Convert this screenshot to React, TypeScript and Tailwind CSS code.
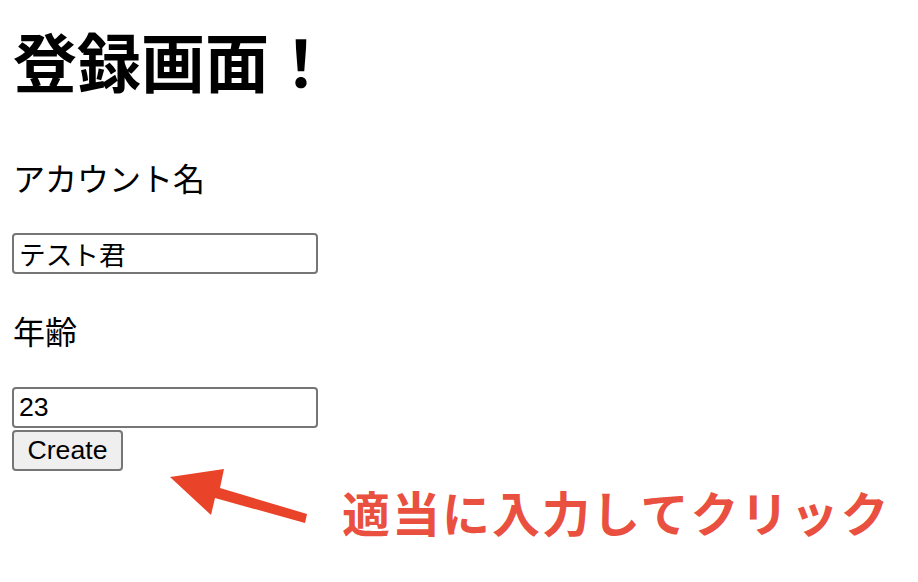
import React from "react";

export default function App() {
  return (
    <div className="relative w-[918px] h-[582px] bg-white overflow-hidden text-black">
      <div className="flex flex-col items-start pl-[12px]">
        <h1 className="mt-[27px] ml-[1px] font-['Noto_Sans_CJK_JP','Liberation_Sans',sans-serif] text-[64px] font-bold leading-none">
          登録画面！
        </h1>
        <p className="mt-[70px] ml-[1px] font-['Noto_Sans_CJK_JP','Liberation_Sans',sans-serif] text-[32px] leading-none">
          アカウント名
        </p>
        <input
          className="mt-[40px] w-[306px] h-[41px] border-2 border-[#767676] rounded-[4px] pl-[5px] pb-[1px] font-['Liberation_Sans','Noto_Sans_CJK_JP',sans-serif] text-[26.67px] leading-none outline-none"
          defaultValue="テスト君"
          readOnly
        />
        <p className="mt-[40px] ml-[1px] font-['Noto_Sans_CJK_JP','Liberation_Sans',sans-serif] text-[32px] leading-none">
          年齢
        </p>
        <input
          className="mt-[41px] w-[306px] h-[41px] border-2 border-[#767676] rounded-[4px] pl-[5px] font-['Liberation_Sans','Noto_Sans_CJK_JP',sans-serif] text-[26.67px] leading-none outline-none"
          defaultValue="23"
          readOnly
        />
        <button className="mt-[2px] w-[111px] h-[41px] border-2 border-[#767676] rounded-[4px] bg-[#efefef] font-['Liberation_Sans','Noto_Sans_CJK_JP',sans-serif] text-[26.67px] leading-none">
          Create
        </button>
      </div>

      <svg className="absolute left-[160px] top-[460px]" width="160" height="70" viewBox="0 0 160 70">
        <polygon points="10,17 64,9 60,28 147,54 145,63 55,38 51,55" fill="#e9432a" />
      </svg>
      <div className="absolute left-[342px] top-[487px] font-['Noto_Sans_CJK_JP','Liberation_Sans',sans-serif] text-[48px] font-bold leading-none tracking-[2px] text-[#e9503f] whitespace-nowrap">
        適当に入力してクリック
      </div>
    </div>
  );
}
